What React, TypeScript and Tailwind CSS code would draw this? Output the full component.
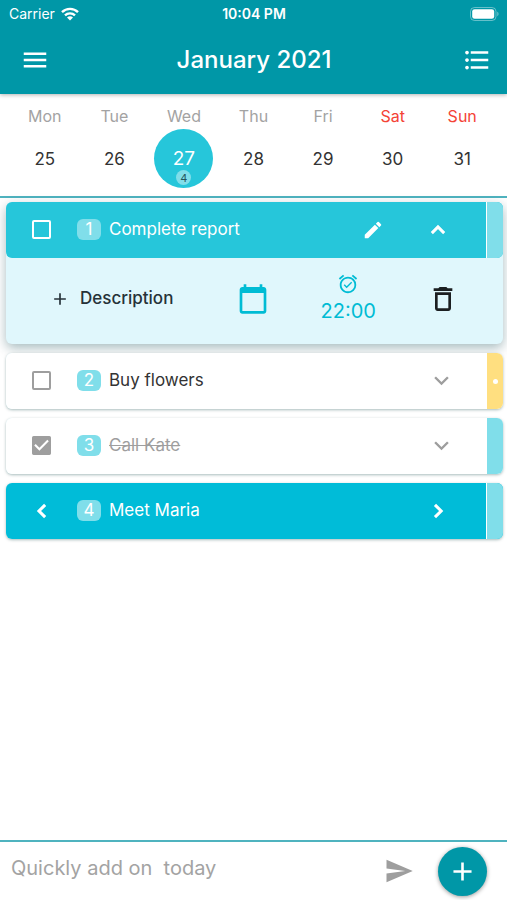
import { useState } from 'react';
import {
  MdAdd,
  MdAlarmOn,
  MdCheckBox,
  MdEdit,
  MdExpandMore,
  MdFormatListBulleted,
  MdMenu,
  MdOutlineDelete,
  MdSend,
} from 'react-icons/md';

interface Task {
  id: number;
  title: string;
  done: boolean;
  kind: 'open' | 'plain' | 'moving';
  strip: string;
  starred?: boolean;
}

const DAYS = [
  { name: 'Mon', date: 25 },
  { name: 'Tue', date: 26 },
  { name: 'Wed', date: 27, tasks: 4 },
  { name: 'Thu', date: 28 },
  { name: 'Fri', date: 29 },
  { name: 'Sat', date: 30, weekend: true },
  { name: 'Sun', date: 31, weekend: true },
];

const TASKS: Task[] = [
  { id: 1, title: 'Complete report', done: false, kind: 'open', strip: 'bg-[#80deea]' },
  { id: 2, title: 'Buy flowers', done: false, kind: 'plain', strip: 'bg-[#ffdf80]', starred: true },
  { id: 3, title: 'Call Kate', done: true, kind: 'plain', strip: 'bg-[#80deea]' },
  { id: 4, title: 'Meet Maria', done: false, kind: 'moving', strip: 'bg-[#80deea]' },
];

const ROW_COLORS: Record<Task['kind'], string> = {
  open: 'bg-[#26c6da] text-white',
  plain: 'bg-white text-[#333333]',
  moving: 'bg-[#00bcd8] text-white',
};

const CARD_SHADOWS: Record<Task['kind'], string> = {
  open: 'shadow-[0_4px_12px_rgba(0,60,70,0.35)]',
  plain: 'shadow-[0_1px_3px_rgba(0,60,60,0.35)]',
  moving: 'shadow-[0_1px_3px_rgba(0,60,60,0.35)]',
};

const CHEVRONS = {
  up: 'M6.7 14.7 12 9.4l5.3 5.3',
  left: 'M14.7 6.7 9.4 12l5.3 5.3',
  right: 'M9.4 6.7l5.3 5.3-5.3 5.3',
};

function BoldChevron({ direction }: { direction: keyof typeof CHEVRONS }) {
  return (
    <svg width="28" height="28" viewBox="0 0 24 24" fill="none" stroke="currentColor" strokeWidth="2.6">
      <path d={CHEVRONS[direction]} />
    </svg>
  );
}

function StatusBar() {
  return (
    <div className="grid h-7 grid-cols-3 items-center pr-2 pl-[9px] text-sm">
      <div className="flex items-center gap-1.5">
        <span>Carrier</span>
        <svg width="18" height="14" viewBox="0 0 18 14" fill="none" stroke="currentColor" strokeWidth="2.4">
          <path d="M1 5.2a11.4 11.4 0 0 1 16 0" />
          <path d="M4 8.4a7.2 7.2 0 0 1 10 0" />
          <path d="M9 13.6 6 10.6a4.3 4.3 0 0 1 6 0Z" fill="currentColor" stroke="none" />
        </svg>
      </div>
      <span className="text-center font-semibold">10:04 PM</span>
      <svg className="ml-auto" width="29" height="14" viewBox="0 0 29 14" fill="none">
        <rect x=".5" y=".5" width="25.5" height="13" rx="4" stroke="#fff" strokeOpacity=".4" />
        <rect x="2.2" y="2.2" width="22" height="9.6" rx="2.4" fill="#fff" />
        <path d="M27.3 4.8c1.6.6 1.6 3.8 0 4.4Z" fill="#fff" fillOpacity=".45" />
      </svg>
    </div>
  );
}

function Week() {
  return (
    <div className="grid grid-cols-7 border-b-2 border-[#4fb3bf] px-[10px] pt-3 pb-2">
      {DAYS.map((day) => (
        <div key={day.name} className="flex flex-col items-center">
          <span className={`h-[23px] text-base leading-5 ${day.weekend ? 'text-[#f44336]' : 'text-[#a3a3a3]'}`}>
            {day.name}
          </span>
          <button
            type="button"
            className={`relative flex size-[59px] items-center justify-center rounded-full leading-5 ${
              day.tasks ? 'bg-[#26c6da] text-[19px] text-white' : 'text-[17px] text-[#333333]'
            }`}
          >
            {day.date}
            {day.tasks && (
              <span className="absolute bottom-[3px] flex size-[15px] items-center justify-center rounded-full bg-[#80deea] text-[11px] leading-3 text-[#24545b]">
                {day.tasks}
              </span>
            )}
          </button>
        </div>
      ))}
    </div>
  );
}

function TaskDetails() {
  return (
    <div className="flex h-[86px] items-center pr-[44px] pb-1 pl-[44px] text-[#00bcd4]">
      <button type="button" className="flex items-center gap-[10px] text-[17px] font-medium text-[#263238]">
        <MdAdd size={20} />
        Description
      </button>
      <div className="flex flex-1 items-center justify-between pl-16">
        <button type="button" aria-label="Pick a date">
          <svg width="32" height="32" viewBox="0 0 24 24" fill="currentColor">
            <path d="M20 3h-1V1h-2v2H7V1H5v2H4c-1.1 0-2 .9-2 2v16c0 1.1.9 2 2 2h16c1.1 0 2-.9 2-2V5c0-1.1-.9-2-2-2zm0 18H4V7.5h16v13.5z" />
          </svg>
        </button>
        <button type="button" className="flex flex-col items-center gap-0.5 text-xl">
          <MdAlarmOn size={22} />
          22:00
        </button>
        <button type="button" aria-label="Delete task" className="text-[#1b1f21]">
          <MdOutlineDelete size={32} />
        </button>
      </div>
    </div>
  );
}

function TaskCard({ task, onToggle }: { task: Task; onToggle: () => void }) {
  const white = task.kind !== 'plain';

  return (
    <li className={`rounded-md bg-[#e0f7fc] ${CARD_SHADOWS[task.kind]}`}>
      <div className={`flex h-14 overflow-hidden rounded-md ${ROW_COLORS[task.kind]}`}>
        <div className="flex flex-1 items-center pr-[34px] pb-px pl-[26px]">
          {task.kind === 'moving' ? (
            <button type="button" aria-label="Previous day" className="mr-[21px] -ml-1">
              <BoldChevron direction="left" />
            </button>
          ) : (
            <span className="relative mr-[26px] flex">
              <input
                id={`task-${task.id}`}
                type="checkbox"
                checked={task.done}
                onChange={onToggle}
                className={`size-[19px] appearance-none rounded-xs border-2 ${
                  white ? 'border-white' : 'border-[#9e9e9e]'
                }`}
              />
              {task.done && (
                <MdCheckBox size={25} className="pointer-events-none absolute -top-[3px] -left-[3px] text-[#9e9e9e]" />
              )}
            </span>
          )}
          <span className="mr-2 flex h-[21px] w-6 items-center justify-center rounded-md bg-[#80deea] text-[17px] text-white">
            {task.id}
          </span>
          {task.kind === 'moving' ? (
            <span className="flex-1 text-[17px]">{task.title}</span>
          ) : (
            <label
              htmlFor={`task-${task.id}`}
              className={`flex-1 text-[17px] ${task.done ? 'text-[#9e9e9e] line-through' : ''}`}
            >
              {task.title}
            </label>
          )}
          {task.kind === 'open' && (
            <>
              <button type="button" aria-label="Edit task" className="mr-[40px]">
                <MdEdit size={22} />
              </button>
              <button type="button" aria-label="Collapse task">
                <BoldChevron direction="up" />
              </button>
            </>
          )}
          {task.kind === 'plain' && (
            <button type="button" aria-label="Expand task" className="-mr-1 text-[#9e9e9e]">
              <MdExpandMore size={29} />
            </button>
          )}
          {task.kind === 'moving' && (
            <button type="button" aria-label="Next day">
              <BoldChevron direction="right" />
            </button>
          )}
        </div>
        <div className={`flex w-[17px] items-center justify-center border-l border-white ${task.strip}`}>
          {task.starred && <span className="size-[5px] rounded-full bg-white" />}
        </div>
      </div>
      {task.kind === 'open' && <TaskDetails />}
    </li>
  );
}

export default function App() {
  const [tasks, setTasks] = useState(TASKS);
  const [draft, setDraft] = useState('');

  const toggle = (id: number) =>
    setTasks(tasks.map((task) => (task.id === id ? { ...task, done: !task.done } : task)));

  return (
    <div className="flex min-h-screen flex-col bg-white font-['Inter',sans-serif]">
      <header className="z-10 bg-[#0097a7] text-white shadow-[0_1px_4px_rgba(0,0,0,0.3)]">
        <StatusBar />
        <div className="flex h-[66px] items-center pr-[15px] pb-0.5 pl-5">
          <button type="button" aria-label="Menu">
            <MdMenu size={30} />
          </button>
          <h1 className="flex-1 pr-1 text-center text-2xl font-medium">January 2021</h1>
          <button type="button" aria-label="List view">
            <MdFormatListBulleted size={30} />
          </button>
        </div>
      </header>

      <Week />

      <main className="flex-1 pt-1 pr-1 pl-1.5">
        <ul className="flex flex-col gap-[9px]">
          {tasks.map((task) => (
            <TaskCard key={task.id} task={task} onToggle={() => toggle(task.id)} />
          ))}
        </ul>
      </main>

      <footer className="flex h-[60px] items-center border-t-2 border-[#4fb3bf] pr-5 pl-[11px]">
        <input
          type="text"
          aria-label="Quick task"
          placeholder={'Quickly add on \u00a0today'}
          value={draft}
          onChange={(e) => setDraft(e.target.value)}
          className="min-w-0 flex-1 pb-1.5 text-xl outline-none placeholder:text-[#a3a3a3]"
        />
        <button type="button" aria-label="Send" className="mr-6 text-[#9e9e9e]">
          <MdSend size={30} />
        </button>
        <button
          type="button"
          aria-label="Add task"
          className="flex size-[49px] items-center justify-center rounded-full bg-[#0097a7] text-white shadow-[0_1px_4px_rgba(0,0,0,0.4)]"
        >
          <MdAdd size={31} />
        </button>
      </footer>
    </div>
  );
}
